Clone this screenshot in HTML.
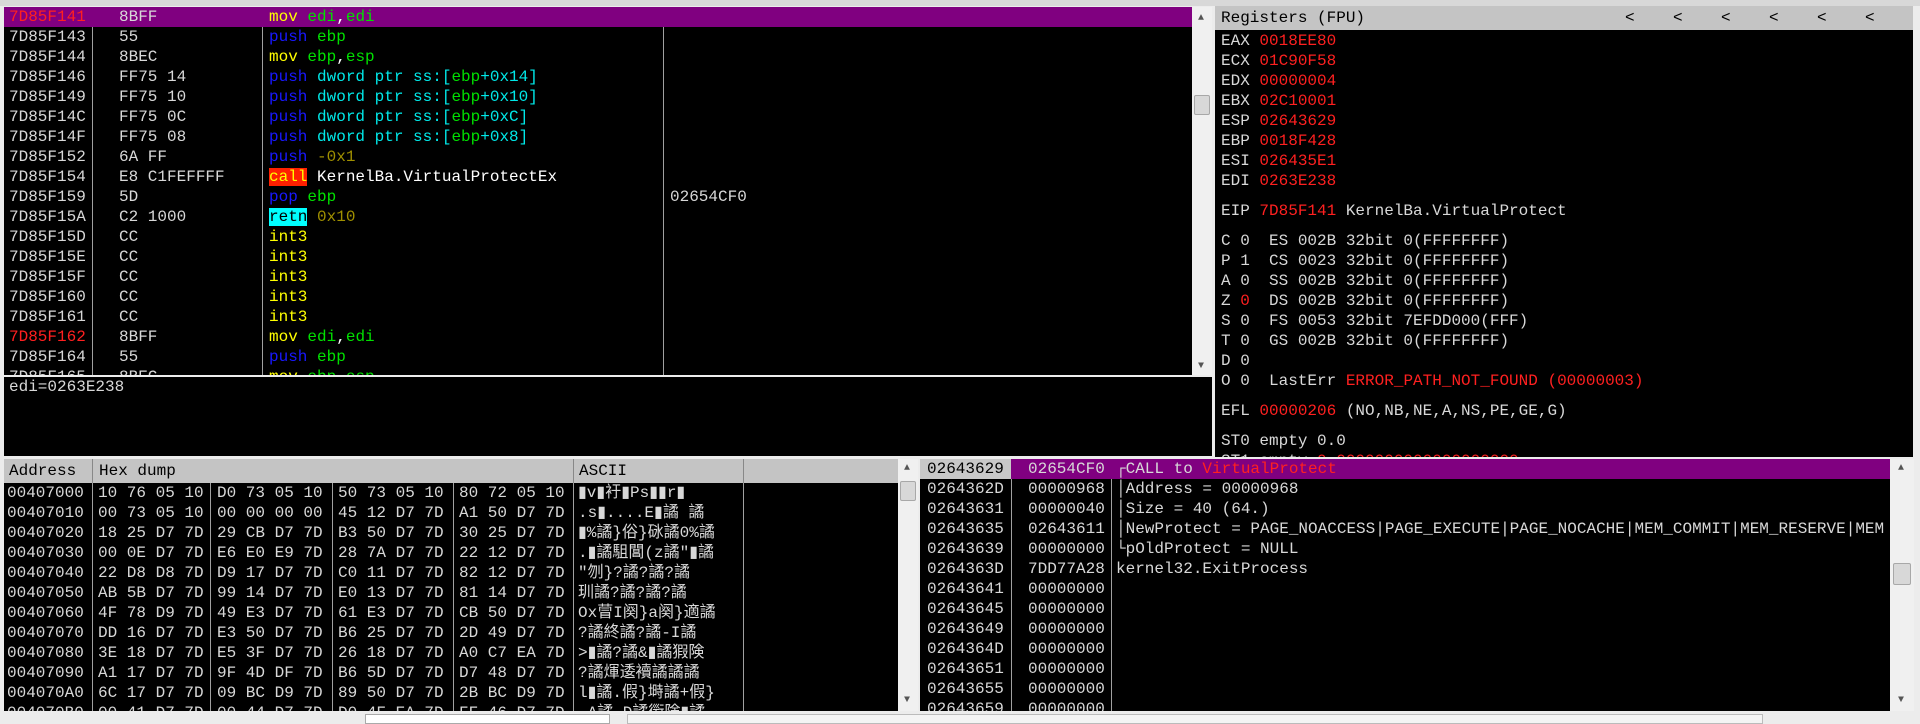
<!DOCTYPE html>
<html><head><meta charset="utf-8"><style>
*{margin:0;padding:0;box-sizing:border-box}
body{width:1920px;height:722px;background:#ececec;position:relative;overflow:hidden;font-family:"Liberation Mono","Noto Sans CJK SC",monospace;font-size:16px;color:#d8d8d8}
.a{position:absolute}
.p{position:absolute;background:#000;overflow:hidden}
.r{position:absolute;left:0;height:20px;line-height:20px;white-space:pre;width:100%}
.t{position:absolute;white-space:pre;line-height:20px}
.red{color:#ff2020}.grn{color:#00e000}.blu{color:#1818ff}.cyn{color:#00e8e8}.yel{color:#ffff00}.olv{color:#a09000}.wht{color:#fff}
.vl{position:absolute;top:0;bottom:0;width:1px;background:#a0a0a0}
.sb{position:absolute;background:#f0f0f0}
.th{position:absolute;background:#d8d8d8;border:1px solid #a8a8a8;border-radius:2px}
.hd{position:absolute;background:#c4c4c4;color:#000;height:24px;line-height:24px;white-space:pre}
</style></head><body>
<div class="a" style="left:0;top:0;width:1920px;height:6px;background:#d8d8d8"></div>

<!-- disassembly -->
<div class="p" style="left:4px;top:7px;width:1188px;height:368px">
<div class="vl" style="left:88px"></div><div class="vl" style="left:258px"></div><div class="vl" style="left:659px"></div>
<div class="r" style="top:0;background:#800080"><span class="t red" style="left:5px">7D85F141</span><span class="t" style="left:115px">8BFF</span><span class="t" style="left:265px"><span class="yel">mov</span> <span class="grn">edi</span><span class="wht">,</span><span class="grn">edi</span></span></div>
<div class="r" style="top:20px"><span class="t" style="left:5px">7D85F143</span><span class="t" style="left:115px">55</span><span class="t" style="left:265px"><span class="blu">push</span> <span class="grn">ebp</span></span></div>
<div class="r" style="top:40px"><span class="t" style="left:5px">7D85F144</span><span class="t" style="left:115px">8BEC</span><span class="t" style="left:265px"><span class="yel">mov</span> <span class="grn">ebp</span><span class="wht">,</span><span class="grn">esp</span></span></div>
<div class="r" style="top:60px"><span class="t" style="left:5px">7D85F146</span><span class="t" style="left:115px">FF75 14</span><span class="t" style="left:265px"><span class="blu">push</span> <span class="cyn">dword ptr ss:[</span><span class="grn">ebp</span><span class="cyn">+0x14]</span></span></div>
<div class="r" style="top:80px"><span class="t" style="left:5px">7D85F149</span><span class="t" style="left:115px">FF75 10</span><span class="t" style="left:265px"><span class="blu">push</span> <span class="cyn">dword ptr ss:[</span><span class="grn">ebp</span><span class="cyn">+0x10]</span></span></div>
<div class="r" style="top:100px"><span class="t" style="left:5px">7D85F14C</span><span class="t" style="left:115px">FF75 0C</span><span class="t" style="left:265px"><span class="blu">push</span> <span class="cyn">dword ptr ss:[</span><span class="grn">ebp</span><span class="cyn">+0xC]</span></span></div>
<div class="r" style="top:120px"><span class="t" style="left:5px">7D85F14F</span><span class="t" style="left:115px">FF75 08</span><span class="t" style="left:265px"><span class="blu">push</span> <span class="cyn">dword ptr ss:[</span><span class="grn">ebp</span><span class="cyn">+0x8]</span></span></div>
<div class="r" style="top:140px"><span class="t" style="left:5px">7D85F152</span><span class="t" style="left:115px">6A FF</span><span class="t" style="left:265px"><span class="blu">push</span> <span class="olv">-0x1</span></span></div>
<div class="r" style="top:160px"><span class="t" style="left:5px">7D85F154</span><span class="t" style="left:115px">E8 C1FEFFFF</span><span class="t" style="left:265px"><span style="background:#ff2000;color:#ffff00">call</span> <span class="wht">KernelBa.VirtualProtectEx</span></span></div>
<div class="r" style="top:180px"><span class="t" style="left:5px">7D85F159</span><span class="t" style="left:115px">5D</span><span class="t" style="left:265px"><span class="blu">pop</span> <span class="grn">ebp</span></span><span class="t" style="left:666px">02654CF0</span></div>
<div class="r" style="top:200px"><span class="t" style="left:5px">7D85F15A</span><span class="t" style="left:115px">C2 1000</span><span class="t" style="left:265px"><span style="background:#00ffff;color:#000">retn</span> <span class="olv">0x10</span></span></div>
<div class="r" style="top:220px"><span class="t" style="left:5px">7D85F15D</span><span class="t" style="left:115px">CC</span><span class="t yel" style="left:265px">int3</span></div>
<div class="r" style="top:240px"><span class="t" style="left:5px">7D85F15E</span><span class="t" style="left:115px">CC</span><span class="t yel" style="left:265px">int3</span></div>
<div class="r" style="top:260px"><span class="t" style="left:5px">7D85F15F</span><span class="t" style="left:115px">CC</span><span class="t yel" style="left:265px">int3</span></div>
<div class="r" style="top:280px"><span class="t" style="left:5px">7D85F160</span><span class="t" style="left:115px">CC</span><span class="t yel" style="left:265px">int3</span></div>
<div class="r" style="top:300px"><span class="t" style="left:5px">7D85F161</span><span class="t" style="left:115px">CC</span><span class="t yel" style="left:265px">int3</span></div>
<div class="r" style="top:320px"><span class="t red" style="left:5px">7D85F162</span><span class="t" style="left:115px">8BFF</span><span class="t" style="left:265px"><span class="yel">mov</span> <span class="grn">edi</span><span class="wht">,</span><span class="grn">edi</span></span></div>
<div class="r" style="top:340px"><span class="t" style="left:5px">7D85F164</span><span class="t" style="left:115px">55</span><span class="t" style="left:265px"><span class="blu">push</span> <span class="grn">ebp</span></span></div>
<div class="r" style="top:360px"><span class="t" style="left:5px">7D85F165</span><span class="t" style="left:115px">8BEC</span><span class="t" style="left:265px"><span class="yel">mov</span> <span class="grn">ebp</span><span class="wht">,</span><span class="grn">esp</span></span></div>
</div>
<div class="sb" style="left:1192px;top:7px;width:20px;height:368px"><div class="th" style="left:2px;top:88px;width:16px;height:20px"></div><span class="t" style="left:6px;top:2px;font-size:10px;color:#555">▲</span><span class="t" style="left:6px;top:350px;font-size:10px;color:#555">▼</span></div>

<!-- info -->
<div class="p" style="left:4px;top:377px;width:1208px;height:79px"><span class="t" style="left:5px;top:0">edi=0263E238</span></div>

<!-- registers -->
<div class="hd" style="left:1215px;top:6px;width:698px;padding-left:6px">Registers (FPU)<span class="t" style="left:410px;top:2px">&lt;    &lt;    &lt;    &lt;    &lt;    &lt;</span></div>
<div class="p" style="left:1215px;top:30px;width:698px;height:427px">
<div class="t" style="left:6px;top:1px">EAX <span class="red">0018EE80</span>
ECX <span class="red">01C90F58</span>
EDX <span class="red">00000004</span>
EBX <span class="red">02C10001</span>
ESP <span class="red">02643629</span>
EBP <span class="red">0018F428</span>
ESI <span class="red">026435E1</span>
EDI <span class="red">0263E238</span>
</div>
<div class="t" style="left:6px;top:171px">EIP <span class="red">7D85F141</span> KernelBa.VirtualProtect</div>
<div class="t" style="left:6px;top:201px">C 0  ES 002B 32bit 0(FFFFFFFF)
P 1  CS 0023 32bit 0(FFFFFFFF)
A 0  SS 002B 32bit 0(FFFFFFFF)
Z <span class="red">0</span>  DS 002B 32bit 0(FFFFFFFF)
S 0  FS 0053 32bit 7EFDD000(FFF)
T 0  GS 002B 32bit 0(FFFFFFFF)
D 0
O 0  LastErr <span class="red">ERROR_PATH_NOT_FOUND (00000003)</span></div>
<div class="t" style="left:6px;top:371px">EFL <span class="red">00000206</span> (NO,NB,NE,A,NS,PE,GE,G)</div>
<div class="t" style="left:6px;top:401px">ST0 empty 0.0
ST1 empty <span class="red">0.0000000000000000000</span></div>
</div>

<!-- dump -->
<div class="hd" style="left:4px;top:459px;width:894px"><span class="t" style="left:5px;top:2px">Address</span><span class="t" style="left:95px;top:2px">Hex dump</span><span class="t" style="left:575px;top:2px">ASCII</span><div class="vl" style="left:88px;background:#888"></div><div class="vl" style="left:569px;background:#888"></div><div class="vl" style="left:739px;background:#888"></div></div>
<div class="p" style="left:4px;top:483px;width:894px;height:228px">
<div class="vl" style="left:88px"></div><div class="vl" style="left:206px"></div><div class="vl" style="left:328px"></div><div class="vl" style="left:449px"></div><div class="vl" style="left:569px"></div><div class="vl" style="left:739px"></div>
<div class="t" style="left:3px;top:0">00407000
00407010
00407020
00407030
00407040
00407050
00407060
00407070
00407080
00407090
004070A0
004070B0</div>
<div class="t" style="left:94px;top:0">10 76 05 10
00 73 05 10
18 25 D7 7D
00 0E D7 7D
22 D8 D8 7D
AB 5B D7 7D
4F 78 D9 7D
DD 16 D7 7D
3E 18 D7 7D
A1 17 D7 7D
6C 17 D7 7D
00 41 D7 7D</div>
<div class="t" style="left:213px;top:0">D0 73 05 10
00 00 00 00
29 CB D7 7D
E6 E0 E9 7D
D9 17 D7 7D
99 14 D7 7D
49 E3 D7 7D
E3 50 D7 7D
E5 3F D7 7D
9F 4D DF 7D
09 BC D9 7D
00 44 D7 7D</div>
<div class="t" style="left:334px;top:0">50 73 05 10
45 12 D7 7D
B3 50 D7 7D
28 7A D7 7D
C0 11 D7 7D
E0 13 D7 7D
61 E3 D7 7D
B6 25 D7 7D
26 18 D7 7D
B6 5D D7 7D
89 50 D7 7D
D0 4F EA 7D</div>
<div class="t" style="left:455px;top:0">80 72 05 10
A1 50 D7 7D
30 25 D7 7D
22 12 D7 7D
82 12 D7 7D
81 14 D7 7D
CB 50 D7 7D
2D 49 D7 7D
A0 C7 EA 7D
D7 48 D7 7D
2B BC D9 7D
FF 46 D7 7D</div>
<div class="t" style="left:574px;top:0;width:164px;overflow:hidden">▮v▮衧▮Ps▮▮r▮
.s▮....E▮譎 譎
▮%譎}俗}砯譎0%譎
.▮譎駔閶(z譎"▮譎
"刎}?譎?譎?譎
玔譎?譎?譎?譎
Ox萺I阕}a阕}適譎
?譎終譎?譎-I譎
>▮譎?譎&▮譎猳険
?譎煇逶襩譎譎譎
l▮譎.假}塒譎+假}
.A譎.D譎衟険▮譎</div>
</div>
<div class="sb" style="left:898px;top:459px;width:20px;height:252px"><div class="th" style="left:2px;top:22px;width:16px;height:20px"></div><span class="t" style="left:6px;top:0;font-size:10px;color:#555">▲</span><span class="t" style="left:6px;top:232px;font-size:10px;color:#555">▼</span></div>

<!-- stack -->
<div class="p" style="left:920px;top:459px;width:970px;height:252px">
<div class="vl" style="left:91px"></div><div class="vl" style="left:191px"></div>
<div class="r" style="top:0;background:#800080"><span class="t" style="left:0;width:91px;background:#c8c8c8;color:#000;padding-left:7px">02643629</span><span class="t" style="left:108px">02654CF0</span><span class="t" style="left:196px">┌CALL to <span class="red">VirtualProtect</span></span></div>
<div class="t" style="left:7px;top:20px">0264362D
02643631
02643635
02643639
0264363D
02643641
02643645
02643649
0264364D
02643651
02643655
02643659</div>
<div class="t" style="left:108px;top:20px">00000968
00000040
02643611
00000000
7DD77A28
00000000
00000000
00000000
00000000
00000000
00000000
00000000</div>
<div class="t" style="left:196px;top:20px">│Address = 00000968
│Size = 40 (64.)
│NewProtect = PAGE_NOACCESS|PAGE_EXECUTE|PAGE_NOCACHE|MEM_COMMIT|MEM_RESERVE|MEM
└pOldProtect = NULL
kernel32.ExitProcess</div>
</div>
<div class="sb" style="left:1890px;top:459px;width:24px;height:252px"><div class="th" style="left:3px;top:104px;width:18px;height:22px"></div><span class="t" style="left:8px;top:0;font-size:10px;color:#555">▲</span><span class="t" style="left:8px;top:232px;font-size:10px;color:#555">▼</span></div>

<!-- status -->
<div class="a" style="left:365px;top:714px;width:245px;height:10px;background:#fff;border:1px solid #aaa"></div>
<div class="a" style="left:627px;top:714px;width:1136px;height:10px;background:#f4f4f4;border:1px solid #bbb"></div>
</body></html>
